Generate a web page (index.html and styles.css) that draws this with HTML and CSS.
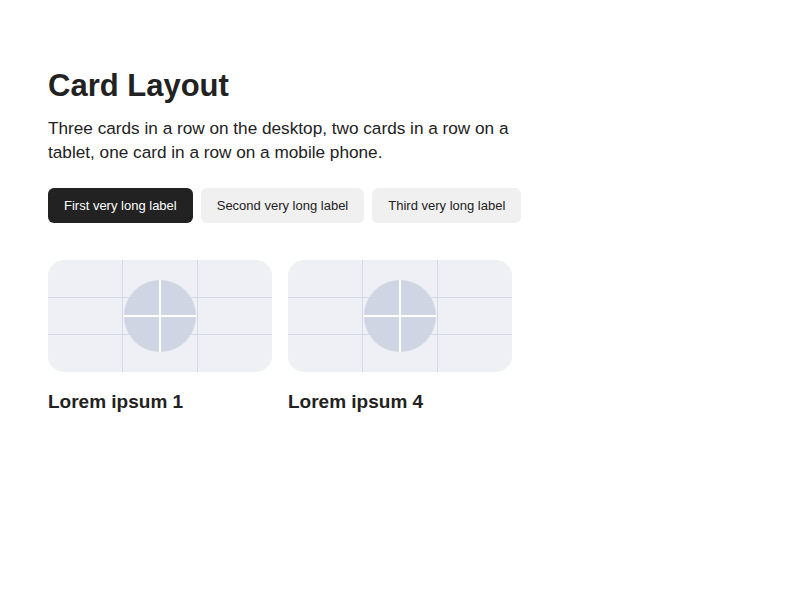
FILE: index.html
```html
<!DOCTYPE html>
<html>
<head>
<meta charset="utf-8">
<link rel="stylesheet" href="styles.css">
</head>
<body>
<main class="page">
  <h1 class="title">Card Layout</h1>
  <p class="lead">Three cards in a row on the desktop, two cards in a row on a tablet, one card in a row on a mobile phone.</p>
  <div class="tabs">
    <button class="tab active">First very long label</button>
    <button class="tab">Second very long label</button>
    <button class="tab">Third very long label</button>
  </div>
  <div class="cards">
    <article class="card">
      <div class="thumb">
        <svg viewBox="0 0 224 112" width="224" height="112">
          <rect width="224" height="112" fill="#eef0f5"/>
          <g stroke="#d5d9e6" stroke-width="1">
            <line x1="74.5" y1="0" x2="74.5" y2="112"/>
            <line x1="149.5" y1="0" x2="149.5" y2="112"/>
            <line x1="0" y1="37.5" x2="224" y2="37.5"/>
            <line x1="0" y1="74.5" x2="224" y2="74.5"/>
          </g>
          <circle cx="112" cy="56" r="36" fill="#cfd5e2"/>
          <g stroke="#ffffff" stroke-width="2">
            <line x1="112" y1="20" x2="112" y2="92"/>
            <line x1="76" y1="56" x2="148" y2="56"/>
          </g>
        </svg>
      </div>
      <h2 class="card-title">Lorem ipsum 1</h2>
    </article>
    <article class="card">
      <div class="thumb">
        <svg viewBox="0 0 224 112" width="224" height="112">
          <rect width="224" height="112" fill="#eef0f5"/>
          <g stroke="#d5d9e6" stroke-width="1">
            <line x1="74.5" y1="0" x2="74.5" y2="112"/>
            <line x1="149.5" y1="0" x2="149.5" y2="112"/>
            <line x1="0" y1="37.5" x2="224" y2="37.5"/>
            <line x1="0" y1="74.5" x2="224" y2="74.5"/>
          </g>
          <circle cx="112" cy="56" r="36" fill="#cfd5e2"/>
          <g stroke="#ffffff" stroke-width="2">
            <line x1="112" y1="20" x2="112" y2="92"/>
            <line x1="76" y1="56" x2="148" y2="56"/>
          </g>
        </svg>
      </div>
      <h2 class="card-title">Lorem ipsum 4</h2>
    </article>
  </div>
</main>
</body>
</html>
```

FILE: styles.css
```css
html, body {
  margin: 0;
  padding: 0;
  background: #ffffff;
}
body {
  font-family: "Liberation Sans", Arial, sans-serif;
  color: #222222;
}
.page {
  padding: 66px 48px 64px;
  max-width: 480px;
}
.title {
  margin: 0;
  font-size: 31px;
  line-height: 40px;
  font-weight: 700;
  color: #222222;
}
.lead {
  margin: 10px 0 0;
  font-size: 17.2px;
  line-height: 24px;
  color: #222222;
}
.tabs {
  display: flex;
  gap: 8px;
  margin-top: 24px;
}
.tab {
  font-family: inherit;
  font-size: 13px;
  height: 35px;
  padding: 0 16px;
  border: none;
  border-radius: 6px;
  background: #f0f0f0;
  color: #222222;
  white-space: nowrap;
}
.tab.active {
  background: #222222;
  color: #ffffff;
}
.cards {
  display: flex;
  gap: 16px;
  margin-top: 37px;
}
.card {
  width: 224px;
}
.thumb {
  width: 224px;
  height: 112px;
  border-radius: 16px;
  overflow: hidden;
}
.thumb svg {
  display: block;
}
.card-title {
  margin: 17px 0 0;
  font-size: 19px;
  line-height: 26px;
  font-weight: 700;
  color: #222222;
}
```
